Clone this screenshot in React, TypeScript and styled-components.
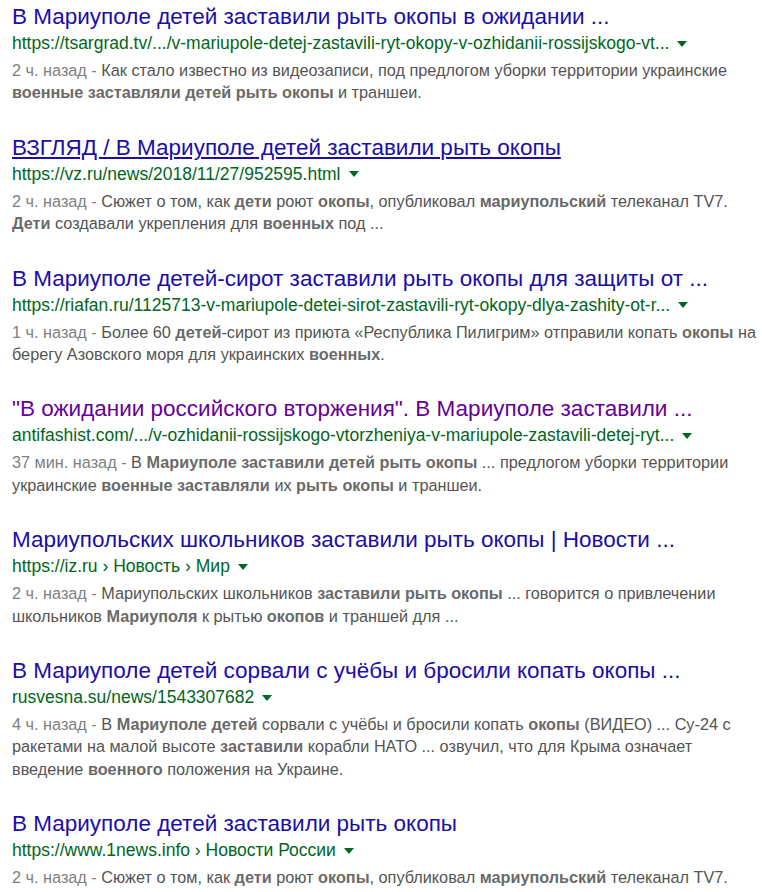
import React from "react";
import styled, { createGlobalStyle } from "styled-components";

const Global = createGlobalStyle`
  html, body { margin: 0; padding: 0; background: #fff; }
  body { font-family: "Liberation Sans", Arial, sans-serif; }
`;

const Page = styled.main`
  display: flex;
  flex-direction: column;
  gap: 31px;
  padding: 4px 0 0 12px;
`;

const Result = styled.section`
  display: flex;
  flex-direction: column;
`;

const Title = styled.a<{ $visited?: boolean; $hover?: boolean }>`
  font-size: 22.5px;
  line-height: 26px;
  color: ${(p) => (p.$visited ? "#660099" : "#1a0dab")};
  text-decoration: ${(p) => (p.$hover ? "underline" : "none")};
  white-space: nowrap;
  cursor: pointer;
`;

const UrlRow = styled.div`
  display: flex;
  align-items: center;
  font-size: 17.5px;
  line-height: 26px;
  color: #006621;
  white-space: nowrap;
  margin-bottom: 3px;
`;

const Caret = styled.span`
  display: inline-block;
  width: 0;
  height: 0;
  margin-left: 8px;
  margin-top: 1px;
  border-left: 5px solid transparent;
  border-right: 5px solid transparent;
  border-top: 6px solid #006621;
`;

const Snippet = styled.div`
  font-size: 16.25px;
  line-height: 22.4px;
  color: #545454;
  white-space: nowrap;
  b {
    color: #6a6a6a;
    font-weight: bold;
  }
`;

const DateText = styled.span`
  color: #808080;
`;

type R = {
  title: string;
  url: string;
  date: string;
  body: React.ReactNode;
  visited?: boolean;
  hover?: boolean;
};

const results: R[] = [
  {
    title: "В Мариуполе детей заставили рыть окопы в ожидании ...",
    url: "https://tsargrad.tv/.../v-mariupole-detej-zastavili-ryt-okopy-v-ozhidanii-rossijskogo-vt...",
    date: "2 ч. назад",
    body: (
      <>
        Как стало известно из видеозаписи, под предлогом уборки территории украинские
        <br />
        <b>военные заставляли детей рыть окопы</b> и траншеи.
      </>
    ),
  },
  {
    title: "ВЗГЛЯД / В Мариуполе детей заставили рыть окопы",
    url: "https://vz.ru/news/2018/11/27/952595.html",
    date: "2 ч. назад",
    hover: true,
    body: (
      <>
        Сюжет о том, как <b>дети</b> роют <b>окопы</b>, опубликовал <b>мариупольский</b> телеканал TV7.
        <br />
        <b>Дети</b> создавали укрепления для <b>военных</b> под ...
      </>
    ),
  },
  {
    title: "В Мариуполе детей-сирот заставили рыть окопы для защиты от ...",
    url: "https://riafan.ru/1125713-v-mariupole-detei-sirot-zastavili-ryt-okopy-dlya-zashity-ot-r...",
    date: "1 ч. назад",
    body: (
      <>
        Более 60 <b>детей</b>-сирот из приюта «Республика Пилигрим» отправили копать <b>окопы</b> на
        <br />
        берегу Азовского моря для украинских <b>военных</b>.
      </>
    ),
  },
  {
    title: "\"В ожидании российского вторжения\". В Мариуполе заставили ...",
    url: "antifashist.com/.../v-ozhidanii-rossijskogo-vtorzheniya-v-mariupole-zastavili-detej-ryt...",
    date: "37 мин. назад",
    visited: true,
    body: (
      <>
        В <b>Мариуполе заставили детей рыть окопы</b> ... предлогом уборки территории
        <br />
        украинские <b>военные заставляли</b> их <b>рыть окопы</b> и траншеи.
      </>
    ),
  },
  {
    title: "Мариупольских школьников заставили рыть окопы | Новости ...",
    url: "https://iz.ru › Новость › Мир",
    date: "2 ч. назад",
    body: (
      <>
        Мариупольских школьников <b>заставили рыть окопы</b> ... говорится о привлечении
        <br />
        школьников <b>Мариуполя</b> к рытью <b>окопов</b> и траншей для ...
      </>
    ),
  },
  {
    title: "В Мариуполе детей сорвали с учёбы и бросили копать окопы ...",
    url: "rusvesna.su/news/1543307682",
    date: "4 ч. назад",
    body: (
      <>
        В <b>Мариуполе детей</b> сорвали с учёбы и бросили копать <b>окопы</b> (ВИДЕО) ... Су-24 с
        <br />
        ракетами на малой высоте <b>заставили</b> корабли НАТО ... озвучил, что для Крыма означает
        <br />
        введение <b>военного</b> положения на Украине.
      </>
    ),
  },
  {
    title: "В Мариуполе детей заставили рыть окопы",
    url: "https://www.1news.info › Новости России",
    date: "2 ч. назад",
    body: (
      <>
        Сюжет о том, как <b>дети</b> роют <b>окопы</b>, опубликовал <b>мариупольский</b> телеканал TV7.
      </>
    ),
  },
];

export default function App() {
  return (
    <>
      <Global />
      <Page>
        {results.map((r, i) => (
          <Result key={i}>
            <Title $visited={r.visited} $hover={r.hover}>
              {r.title}
            </Title>
            <UrlRow>
              {r.url}
              <Caret />
            </UrlRow>
            <Snippet>
              <DateText>{r.date} - </DateText>
              {r.body}
            </Snippet>
          </Result>
        ))}
      </Page>
    </>
  );
}
